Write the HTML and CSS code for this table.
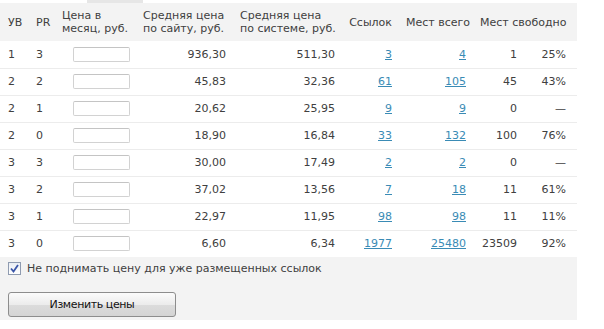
FILE: index.html
```html
<!DOCTYPE html>
<html lang="ru">
<head>
<meta charset="utf-8">
<link rel="stylesheet" href="styles.css">
</head>
<body>
<div class="panel">
  <div class="toptab"></div>
  <table class="prices">
    <colgroup>
      <col class="w1"><col class="w2"><col class="w3"><col class="w4"><col class="w5"><col class="w6"><col class="w7"><col class="w8"><col class="w9">
    </colgroup>
    <thead>
      <tr>
        <th class="l">УВ</th>
        <th class="l">PR</th>
        <th class="l c3">Цена в<br>месяц, руб.</th>
        <th class="l">Средняя цена<br>по сайту, руб.</th>
        <th class="l">Средняя цена<br>по системе, руб.</th>
        <th class="r">Ссылок</th>
        <th class="r">Мест всего</th>
        <th class="r last" colspan="2">Мест свободно</th>
      </tr>
    </thead>
    <tbody>
      <tr><td>1</td><td>3</td><td class="c3"><span class="inp"></span></td><td class="r">936,30</td><td class="r">511,30</td><td class="r"><a href="#">3</a></td><td class="r"><a href="#">4</a></td><td class="r">1</td><td class="r last">25%</td></tr>
      <tr><td>2</td><td>2</td><td class="c3"><span class="inp"></span></td><td class="r">45,83</td><td class="r">32,36</td><td class="r"><a href="#">61</a></td><td class="r"><a href="#">105</a></td><td class="r">45</td><td class="r last">43%</td></tr>
      <tr><td>2</td><td>1</td><td class="c3"><span class="inp"></span></td><td class="r">20,62</td><td class="r">25,95</td><td class="r"><a href="#">9</a></td><td class="r"><a href="#">9</a></td><td class="r">0</td><td class="r last">—</td></tr>
      <tr><td>2</td><td>0</td><td class="c3"><span class="inp"></span></td><td class="r">18,90</td><td class="r">16,84</td><td class="r"><a href="#">33</a></td><td class="r"><a href="#">132</a></td><td class="r">100</td><td class="r last">76%</td></tr>
      <tr><td>3</td><td>3</td><td class="c3"><span class="inp"></span></td><td class="r">30,00</td><td class="r">17,49</td><td class="r"><a href="#">2</a></td><td class="r"><a href="#">2</a></td><td class="r">0</td><td class="r last">—</td></tr>
      <tr><td>3</td><td>2</td><td class="c3"><span class="inp"></span></td><td class="r">37,02</td><td class="r">13,56</td><td class="r"><a href="#">7</a></td><td class="r"><a href="#">18</a></td><td class="r">11</td><td class="r last">61%</td></tr>
      <tr><td>3</td><td>1</td><td class="c3"><span class="inp"></span></td><td class="r">22,97</td><td class="r">11,95</td><td class="r"><a href="#">98</a></td><td class="r"><a href="#">98</a></td><td class="r">11</td><td class="r last">11%</td></tr>
      <tr><td>3</td><td>0</td><td class="c3"><span class="inp"></span></td><td class="r">6,60</td><td class="r">6,34</td><td class="r"><a href="#">1977</a></td><td class="r"><a href="#">25480</a></td><td class="r">23509</td><td class="r last">92%</td></tr>
    </tbody>
  </table>
  <div class="footer">
    <label class="check">
      <span class="box"><svg width="9" height="9" viewBox="0 0 9 9"><path d="M1 4.5 L3.5 7.5 L8 1" fill="none" stroke="#3a55a8" stroke-width="1.8"/></svg></span>
      Не поднимать цену для уже размещенных ссылок
    </label>
    <div class="btn">Изменить цены</div>
  </div>
</div>
</body>
</html>
```
FILE: styles.css
```css
html, body {
  margin: 0;
  padding: 0;
  background: #ffffff;
}
body {
  font-family: "DejaVu Sans", Verdana, sans-serif;
  font-size: 11px;
  color: #404040;
}
.panel {
  width: 577px;
}
.toptab {
  width: 56px;
  height: 3px;
  margin-left: 87px;
  background: #e6e6e6;
}
.prices {
  width: 577px;
  border-collapse: collapse;
  table-layout: fixed;
}
.w1 { width: 28px; }
.w2 { width: 28px; }
.w3 { width: 79px; }
.w4 { width: 97px; }
.w5 { width: 109px; }
.w6 { width: 57px; }
.w7 { width: 74px; }
.w8 { width: 51px; }
.w9 { width: 54px; }
.prices thead tr {
  background: #f3f3f3;
  height: 38px;
}
.prices th {
  font-weight: normal;
  line-height: 13px;
  padding: 0 6px 0 8px;
  white-space: nowrap;
  vertical-align: middle;
}
.prices th.l { text-align: left; }
.prices th.r { text-align: right; }
.prices th.c3 { padding-left: 6px; }
.prices tbody tr {
  height: 27px;
  border-top: 1px solid #ececec;
}
.prices tbody tr:first-child { border-top: none; }
.prices td {
  padding: 0 6px 0 8px;
  white-space: nowrap;
  vertical-align: middle;
}
.prices td.r { text-align: right; }
.prices .last { padding-right: 11px; }
.prices td.c3 { padding-left: 17px; }
.inp {
  display: block;
  width: 55px;
  height: 13px;
  border: 1px solid #d2d2d2;
  border-top-color: #c4c4c4;
  border-radius: 2px;
  background: #ffffff;
}
.prices a {
  color: #3a8bb5;
  text-decoration: underline;
}
.footer {
  background: #f3f3f3;
  height: 63px;
  padding: 5px 0 0 8px;
  box-sizing: border-box;
}
.check {
  display: flex;
  align-items: center;
  gap: 6px;
  height: 13px;
  color: #404040;
}
.box {
  display: flex;
  align-items: center;
  justify-content: center;
  width: 11px;
  height: 11px;
  border: 1px solid #8f9bb0;
  background: linear-gradient(#e9edf3, #ffffff);
}
.btn {
  margin-top: 17px;
  width: 166px;
  height: 23px;
  border: 1px solid #8d8d8d;
  border-radius: 3px;
  background: linear-gradient(#fbfbfb 0%, #ececec 50%, #dcdcdc 51%, #d4d4d4 100%);
  font-family: "DejaVu Sans", Tahoma, sans-serif;
  font-size: 11px;
  letter-spacing: -0.4px;
  color: #111111;
  display: flex;
  align-items: center;
  justify-content: center;
}
```
